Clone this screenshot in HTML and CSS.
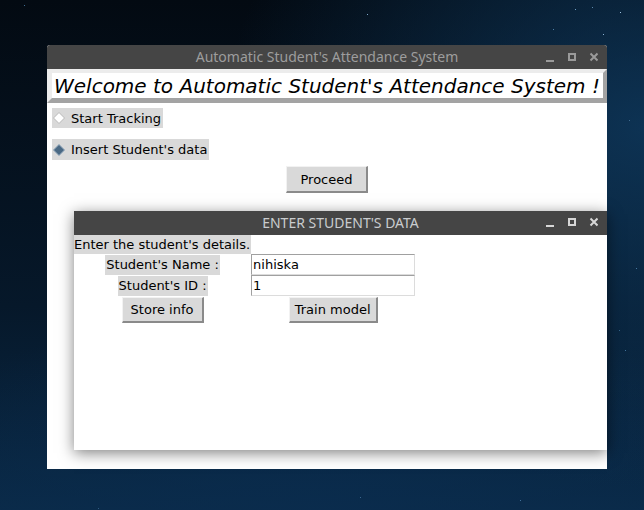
FILE: index.html
```html
<!DOCTYPE html>
<html>
<head>
<meta charset="utf-8">
<link rel="stylesheet" href="styles.css">
</head>
<body>
<div class="desktop">
  <div class="stars"></div>

  <div class="window main-win">
    <div class="titlebar inactive">
      <span></span>
      <span class="title">Automatic Student's Attendance System</span>
      <span class="controls">
        <svg width="60" height="24" viewBox="0 0 60 24">
          <rect x="8" y="15" width="8" height="2" fill="currentColor"/>
          <rect x="31" y="9" width="6" height="6" fill="none" stroke="currentColor" stroke-width="2"/>
          <path d="M52.5 8.5 L59.5 15.5 M59.5 8.5 L52.5 15.5" stroke="currentColor" stroke-width="2" fill="none"/>
        </svg>
      </span>
    </div>
    <div class="content">
      <div class="welcome"><span>Welcome to Automatic Student's Attendance System !</span></div>
      <div class="radio first">
        <svg class="ind" width="12" height="12" viewBox="0 0 12 12"><polygon points="6,0.5 11.5,6 6,11.5 0.5,6" fill="#ffffff" stroke="#b8b8b8" stroke-width="1"/></svg>
        <span>Start Tracking</span>
      </div>
      <div class="radio second">
        <svg class="ind" width="12" height="12" viewBox="0 0 12 12"><polygon points="6,0.5 11.5,6 6,11.5 0.5,6" fill="#4a6984" stroke="#8da4b8" stroke-width="1"/></svg>
        <span>Insert Student's data</span>
      </div>
      <button class="btn proceed">Proceed</button>
    </div>
  </div>

  <div class="window data-win">
    <div class="titlebar active">
      <span></span>
      <span class="title">ENTER STUDENT'S DATA</span>
      <span class="controls">
        <svg width="60" height="24" viewBox="0 0 60 24">
          <rect x="8" y="14" width="8" height="2" fill="currentColor"/>
          <rect x="31" y="8" width="6" height="6" fill="none" stroke="currentColor" stroke-width="2"/>
          <path d="M52.5 7.5 L59.5 14.5 M59.5 7.5 L52.5 14.5" stroke="currentColor" stroke-width="2" fill="none"/>
        </svg>
      </span>
    </div>
    <div class="form">
      <div class="lbl intro">Enter the student's details.</div>
      <div></div>
      <div class="lbl field">Student's Name :</div>
      <div class="entry">nihiska</div>
      <div class="lbl field">Student's ID :</div>
      <div class="entry">1</div>
      <button class="btn store">Store info</button>
      <button class="btn train">Train model</button>
    </div>
  </div>
</div>
</body>
</html>
```

FILE: styles.css
```css
html, body {
  margin: 0;
  padding: 0;
}

body {
  width: 644px;
  height: 510px;
  overflow: hidden;
  font-family: "DejaVu Sans", sans-serif;
}

.desktop {
  position: relative;
  width: 644px;
  height: 510px;
  background:
    radial-gradient(ellipse 420px 360px at 100% 25%, rgba(16, 62, 102, 0.75), rgba(16, 62, 102, 0) 100%),
    radial-gradient(ellipse 500px 200px at 50% 100%, rgba(10, 44, 78, 0.8), rgba(10, 44, 78, 0) 100%),
    linear-gradient(180deg, #030a12 0%, #06182a 60%, #0a2a48 100%);
}

.stars {
  position: absolute;
  left: 0;
  top: 0;
  width: 1px;
  height: 1px;
  background: transparent;
  box-shadow:
    24px 5px 0 #3d6b8f, 367px 14px 0 #7fa8c8, 575px 9px 0 #6f9dc2,
    592px 7px 0 #5c88ad, 603px 34px 0 #8ab2d2, 620px 12px 0 #9cc2e0,
    553px 29px 0 #4d7ea6, 485px 48px 0 #41709a, 629px 120px 0 #3f6c92,
    625px 350px 0 #42729a, 619px 330px 0 #36648c, 520px 500px 0 #41709a,
    360px 497px 0 #3a6890, 98px 508px 0 #2e5a80, 636px 268px 0 #46779f;
}

.window {
  position: absolute;
  display: flex;
  flex-direction: column;
  background: #ffffff;
}

.main-win {
  left: 47px;
  top: 45px;
  width: 560px;
  height: 424px;
  border-radius: 3px 3px 0 0;
}

.data-win {
  left: 74px;
  top: 211px;
  width: 533px;
  height: 239px;
  box-shadow: 0 3px 14px rgba(0, 0, 0, 0.5);
}

.titlebar {
  height: 24px;
  flex: none;
  display: grid;
  grid-template-columns: 1fr auto 1fr;
  align-items: center;
  background: #454545;
  font-family: "Noto Sans", sans-serif;
  font-size: 14px;
  line-height: 24px;
}

.main-win .titlebar {
  border-radius: 3px 3px 0 0;
}

.titlebar.inactive {
  color: #9d9d9d;
}

.titlebar.active {
  color: #c9ccce;
}

.title {
  white-space: nowrap;
}

.controls {
  justify-self: end;
  display: flex;
  padding-right: 9px;
}

.titlebar.inactive .controls {
  color: #9a9a9a;
}

.titlebar.active .controls {
  color: #d6d6d6;
}

.content {
  flex: 1;
  display: flex;
  flex-direction: column;
  align-items: flex-start;
}

.welcome {
  align-self: stretch;
  height: 25px;
  border-style: solid;
  border-width: 4px 4px 5px 5px;
  border-color: #ececec #a3a3a3 #a3a3a3 #ececec;
  background: #ffffff;
  display: flex;
  align-items: center;
  font-style: italic;
  font-size: 20px;
  color: #000000;
  white-space: nowrap;
  overflow: hidden;
}

.welcome span {
  padding-left: 2px;
}

.radio {
  display: flex;
  align-items: center;
  height: 20px;
  margin-left: 5px;
  padding: 0 2px 0 1px;
  background: #d9d9d9;
  font-size: 13px;
  color: #000000;
}

.radio.first {
  margin-top: 5px;
}

.radio.second {
  margin-top: 11px;
  height: 21px;
}

.ind {
  margin-right: 6px;
}

.btn {
  box-sizing: border-box;
  margin: 0;
  padding: 0;
  height: 27px;
  background: #d9d9d9;
  border-style: solid;
  border-width: 1px 2px 2px 1px;
  border-color: #f2f2f2 #8a8a8a #8a8a8a #f2f2f2;
  font-family: "DejaVu Sans", sans-serif;
  font-size: 13px;
  color: #000000;
}

.proceed {
  align-self: center;
  width: 82px;
  margin-top: 6px;
}

.form {
  align-self: flex-start;
  display: grid;
  grid-template-columns: max-content 164px;
  grid-template-rows: 19px 21px 21px 27px;
  justify-content: start;
  align-items: center;
  justify-items: center;
  font-size: 13px;
  color: #000000;
}

.lbl {
  background: #d9d9d9;
  padding: 0 1px;
  line-height: 20px;
  white-space: nowrap;
}

.lbl.intro {
  justify-self: stretch;
  padding: 0 1px 0 0;
  line-height: 19px;
}

.entry {
  box-sizing: border-box;
  justify-self: stretch;
  height: 21px;
  border-style: solid;
  border-width: 1px;
  border-color: #a0a0a0 #dcdcdc #dcdcdc #a0a0a0;
  padding-left: 1px;
  line-height: 19px;
  background: #ffffff;
}

.store {
  width: 82px;
  height: 26px;
  align-self: end;
}

.train {
  width: 89px;
  height: 26px;
  align-self: end;
}
```
